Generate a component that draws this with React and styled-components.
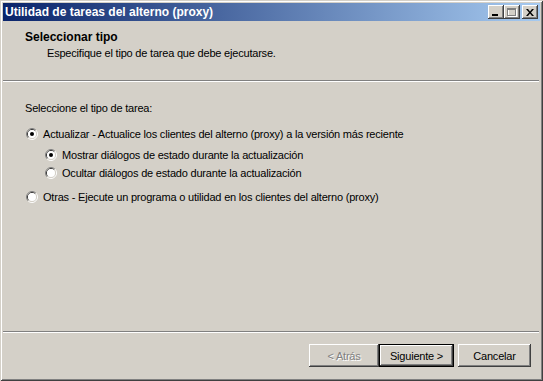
import React, { useState } from 'react'
import styled, { createGlobalStyle } from 'styled-components'

const GlobalStyle = createGlobalStyle`
  html, body {
    margin: 0;
    padding: 0;
    background: #d4d0c8;
  }
  body {
    font-family: "Liberation Sans", Arial, sans-serif;
    font-size: 11px;
  }
`

const options = [
  {
    id: 'update',
    label: 'Actualizar - Actualice los clientes del alterno (proxy) a la versión más reciente',
    level: 0,
    gap: 10,
  },
  { id: 'show', label: 'Mostrar diálogos de estado durante la actualización', level: 1, gap: 3 },
  { id: 'hide', label: 'Ocultar diálogos de estado durante la actualización', level: 1, gap: 0 },
  {
    id: 'other',
    label: 'Otras - Ejecute un programa o utilidad en los clientes del alterno (proxy)',
    level: 0,
    gap: 6,
  },
]

function RadioMark({ checked }) {
  return (
    <svg width="12" height="12" viewBox="0 0 12 12">
      <circle cx="6" cy="6" r="5.5" fill="#d4d0c8" />
      <path d="M2.11 9.89 A5.5 5.5 0 0 1 9.89 2.11" fill="none" stroke="#808080" strokeWidth="1" />
      <path d="M9.89 2.11 A5.5 5.5 0 0 1 2.11 9.89" fill="none" stroke="#ffffff" strokeWidth="1" />
      <path d="M2.82 9.18 A4.5 4.5 0 0 1 9.18 2.82" fill="none" stroke="#404040" strokeWidth="1" />
      <path d="M9.18 2.82 A4.5 4.5 0 0 1 2.82 9.18" fill="none" stroke="#d4d0c8" strokeWidth="1" />
      <circle cx="6" cy="6" r="4" fill="#ffffff" />
      {checked && <circle cx="6" cy="6" r="2" fill="#000" />}
    </svg>
  )
}

export default function App() {
  const [task, setTask] = useState('update')
  const [status, setStatus] = useState('show')

  return (
    <>
      <GlobalStyle />
      <Window>
        <TitleBar>
          <TitleText>Utilidad de tareas del alterno (proxy)</TitleText>
          <Caption>
            <CapButton aria-label="Minimizar">
              <svg width="8" height="7" viewBox="0 0 8 7">
                <rect x="0" y="5" width="6" height="2" fill="#000" />
              </svg>
            </CapButton>
            <CapButton aria-label="Maximizar" disabled>
              <svg width="10" height="9" viewBox="0 0 10 9">
                <rect x="1.5" y="1.5" width="8" height="7" fill="none" stroke="#fff" />
                <rect x="0.5" y="0.5" width="8" height="7" fill="none" stroke="#808080" />
                <rect x="0" y="0" width="9" height="2" fill="#808080" />
              </svg>
            </CapButton>
            <CapButton aria-label="Cerrar" $close>
              <svg width="8" height="7" viewBox="0 0 8 7">
                <path d="M0 0h2l2 2.5L6 0h2L5 3.5 8 7H6L4 4.5 2 7H0l3-3.5z" fill="#000" />
              </svg>
            </CapButton>
          </Caption>
        </TitleBar>

        <Header>
          <HeaderTitle>Seleccionar tipo</HeaderTitle>
          <HeaderText>Especifique el tipo de tarea que debe ejecutarse.</HeaderText>
        </Header>
        <Separator />

        <Body>
          <Prompt>Seleccione el tipo de tarea:</Prompt>
          {options.map((o) => {
            const checked = o.level === 0 ? task === o.id : status === o.id
            return (
              <Option
                key={o.id}
                $level={o.level}
                $gap={o.gap}
                onClick={() => (o.level === 0 ? setTask(o.id) : setStatus(o.id))}
              >
                <RadioMark checked={checked} />
                <span>{o.label}</span>
              </Option>
            )
          })}
        </Body>

        <Separator />
        <Footer>
          <PushButton disabled $width={70}>
            &lt; Atrás
          </PushButton>
          <PushButton $default $width={75}>
            Siguiente &gt;
          </PushButton>
          <PushButton $width={73} $gapLeft={4}>
            Cancelar
          </PushButton>
        </Footer>
      </Window>
    </>
  )
}

const Window = styled.div`
  box-sizing: border-box;
  width: 543px;
  height: 381px;
  padding: 3px;
  display: flex;
  flex-direction: column;
  background: #d4d0c8;
  letter-spacing: -0.2px;
  box-shadow: inset 1px 1px #d4d0c8, inset -1px -1px #404040, inset 2px 2px #ffffff,
    inset -2px -2px #808080;
`

const TitleBar = styled.div`
  height: 18px;
  display: flex;
  align-items: center;
  padding: 0 2px 0 2px;
  background: linear-gradient(to right, #0a246a, #a6caf0);
`

const TitleText = styled.div`
  flex: 1;
  color: #fff;
  font-weight: bold;
  font-size: 12px;
  letter-spacing: 0;
  white-space: nowrap;
`

const Caption = styled.div`
  display: flex;
  align-items: center;
`

const CapButton = styled.button`
  box-sizing: border-box;
  width: 16px;
  height: 14px;
  margin-left: ${(p) => (p.$close ? '2px' : '0')};
  padding: 0;
  border: none;
  background: #d4d0c8;
  display: flex;
  align-items: center;
  justify-content: center;
  box-shadow: inset -1px -1px #404040, inset 1px 1px #ffffff, inset -2px -2px #808080,
    inset 2px 2px #d4d0c8;
`

const Header = styled.div`
  height: 59px;
  box-sizing: border-box;
  padding: 10px 0 0 22px;
`

const HeaderTitle = styled.div`
  font-weight: bold;
  font-size: 12px;
  letter-spacing: 0;
  line-height: 13px;
  color: #000;
`

const HeaderText = styled.div`
  line-height: 13px;
  margin: 3px 0 0 22px;
  color: #000;
`

const Separator = styled.div`
  height: 0;
  border-top: 1px solid #808080;
  border-bottom: 1px solid #ffffff;
  margin-right: 1px;
`

const Body = styled.div`
  flex: 1;
  padding: 20px 0 0 22px;
`

const Prompt = styled.div`
  line-height: 13px;
`

const Option = styled.div`
  display: flex;
  align-items: center;
  gap: 5px;
  height: 18px;
  margin-top: ${(p) => p.$gap}px;
  padding-left: ${(p) => 1 + p.$level * 19}px;
  cursor: default;
  white-space: nowrap;
  svg {
    flex: none;
  }
`

const Footer = styled.div`
  display: flex;
  justify-content: flex-end;
  padding: 11px 9px 11px 0;
`

const PushButton = styled.button`
  box-sizing: border-box;
  width: ${(p) => p.$width}px;
  height: 23px;
  margin-left: ${(p) => p.$gapLeft || 0}px;
  padding: 0;
  font-family: inherit;
  font-size: 11px;
  letter-spacing: inherit;
  background: #d4d0c8;
  color: ${(p) => (p.disabled ? '#808080' : '#000')};
  text-shadow: ${(p) => (p.disabled ? '1px 1px #ffffff' : 'none')};
  border: ${(p) => (p.$default ? '1px solid #000' : 'none')};
  box-shadow: inset -1px -1px #404040, inset 1px 1px #ffffff, inset -2px -2px #808080,
    inset 2px 2px #d4d0c8;
`
